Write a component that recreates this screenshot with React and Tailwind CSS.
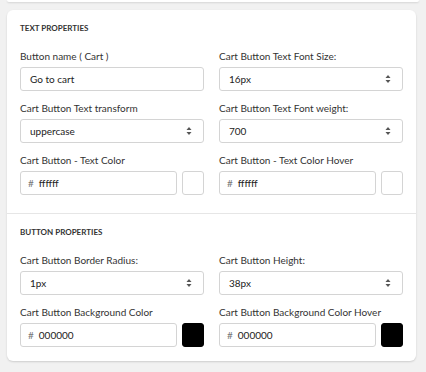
import { useState } from 'react'

const font = { fontFamily: 'Lato, "Noto Sans", sans-serif' }

function Arrows() {
  return (
    <svg width="6" height="9" viewBox="0 0 6 9" className="absolute right-[11px] top-1/2 -translate-y-1/2">
      <path d="M3 0.5 L5.5 3.5 H0.5 Z" fill="#555" />
      <path d="M3 8.5 L5.5 5.5 H0.5 Z" fill="#555" />
    </svg>
  )
}

function Field({ label, children }) {
  return (
    <div>
      <div className="text-[10px] leading-[13px] text-[#333] mb-[4px]">{label}</div>
      {children}
    </div>
  )
}

function TextBox({ value }) {
  return (
    <div className="h-[24px] border border-[#d4d4d4] rounded-[3px] bg-white flex items-center px-[9px] text-[10px] text-[#222]">
      {value}
    </div>
  )
}

function SelectBox({ value }) {
  return (
    <div className="relative h-[24px] border border-[#d4d4d4] rounded-[3px] bg-white flex items-center px-[9px] text-[10px] text-[#222]">
      {value}
      <Arrows />
    </div>
  )
}

function ColorBox({ value, swatch }) {
  return (
    <div className="flex gap-[5px]">
      <div className="flex-1 h-[24px] border border-[#d4d4d4] rounded-[3px] bg-white flex items-center px-[7px] text-[10px] text-[#222]">
        <span className="text-[#777] mr-[5px]">#</span>
        {value}
      </div>
      <div
        className={
          swatch === 'black'
            ? 'w-[22px] h-[24px] rounded-[3px] bg-black border border-black'
            : 'w-[22px] h-[24px] rounded-[3px] bg-white border border-[#d4d4d4]'
        }
      />
    </div>
  )
}

export default function App() {
  const [name] = useState('Go to cart')

  return (
    <div className="w-[426px] h-[372px] bg-[#f1f1f1] overflow-hidden" style={font}>
      <div className="mx-[7px] h-[2px] bg-white rounded-b-[6px] shadow-[0_1px_2px_rgba(0,0,0,0.12)]" />
      <div className="mx-[7px] mt-[8px] w-[409px] bg-white rounded-[6px] shadow-[0_1px_2px_rgba(0,0,0,0.15)]">
        <div className="px-[13px] pt-[13px] pb-[18px]">
          <div className="text-[8px] font-bold text-[#333] uppercase leading-[10px]">Text properties</div>
          <div className="grid grid-cols-2 gap-x-[15px] gap-y-[11px] mt-[17px]">
            <Field label="Button name ( Cart )">
              <TextBox value={name} />
            </Field>
            <Field label="Cart Button Text Font Size:">
              <SelectBox value="16px" />
            </Field>
            <Field label="Cart Button Text transform">
              <SelectBox value="uppercase" />
            </Field>
            <Field label="Cart Button Text Font weight:">
              <SelectBox value="700" />
            </Field>
            <Field label="Cart Button - Text Color">
              <ColorBox value="ffffff" swatch="white" />
            </Field>
            <Field label="Cart Button - Text Color Hover">
              <ColorBox value="ffffff" swatch="white" />
            </Field>
          </div>
        </div>
        <div className="border-t border-[#e6e6e6] px-[13px] pt-[13px] pb-[14px]">
          <div className="text-[8px] font-bold text-[#333] uppercase leading-[10px]">Button properties</div>
          <div className="grid grid-cols-2 gap-x-[15px] gap-y-[11px] mt-[17px]">
            <Field label="Cart Button Border Radius:">
              <SelectBox value="1px" />
            </Field>
            <Field label="Cart Button Height:">
              <SelectBox value="38px" />
            </Field>
            <Field label="Cart Button Background Color">
              <ColorBox value="000000" swatch="black" />
            </Field>
            <Field label="Cart Button Background Color Hover">
              <ColorBox value="000000" swatch="black" />
            </Field>
          </div>
        </div>
      </div>
    </div>
  )
}
